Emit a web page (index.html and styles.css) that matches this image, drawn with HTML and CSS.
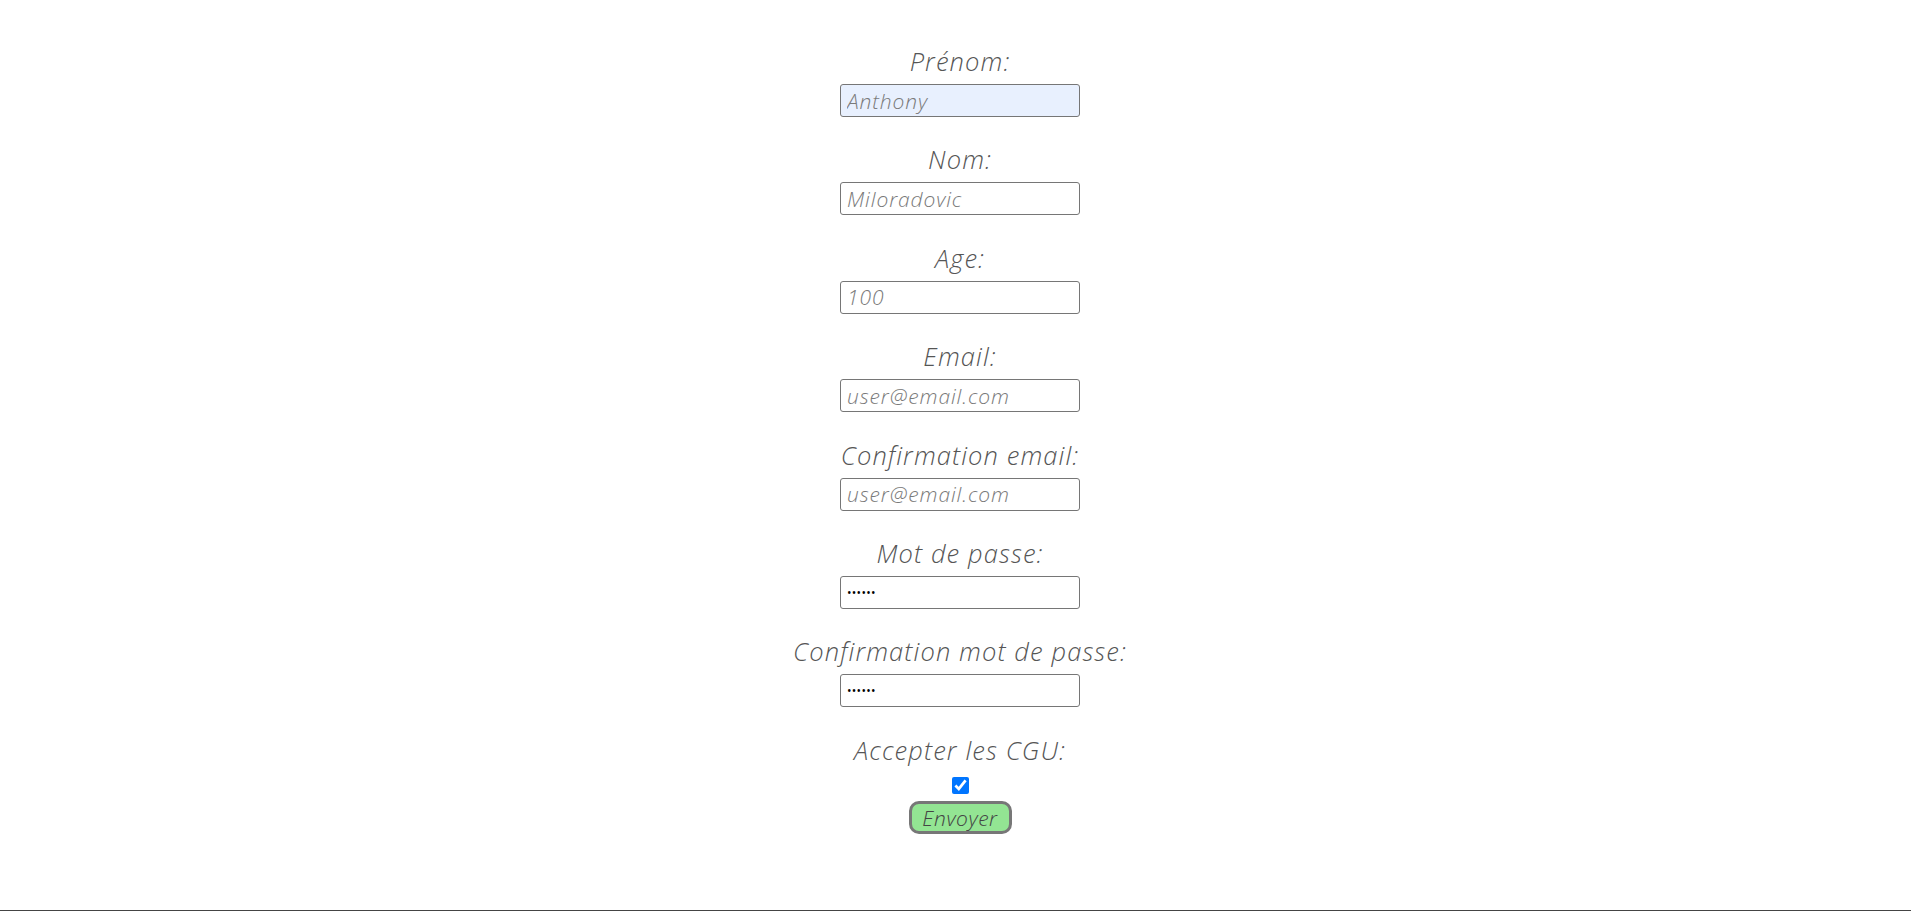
FILE: index.html
```html
<!DOCTYPE html>
<html lang="fr">
<head>
<meta charset="utf-8">
<title>Inscription</title>
<link rel="stylesheet" href="styles.css">
</head>
<body>
<form class="form">
  <div class="field">
    <label class="label" for="prenom">Prénom:</label>
    <input class="input autofill" id="prenom" type="text" placeholder="Anthony">
  </div>
  <div class="field">
    <label class="label" for="nom">Nom:</label>
    <input class="input" id="nom" type="text" placeholder="Miloradovic">
  </div>
  <div class="field">
    <label class="label" for="age">Age:</label>
    <input class="input" id="age" type="text" placeholder="100">
  </div>
  <div class="field">
    <label class="label" for="email">Email:</label>
    <input class="input" id="email" type="text" placeholder="user@email.com">
  </div>
  <div class="field">
    <label class="label" for="email2">Confirmation email:</label>
    <input class="input" id="email2" type="text" placeholder="user@email.com">
  </div>
  <div class="field">
    <label class="label" for="mdp">Mot de passe:</label>
    <input class="input password" id="mdp" type="password" value="aaaaaa">
  </div>
  <div class="field">
    <label class="label" for="mdp2">Confirmation mot de passe:</label>
    <input class="input password" id="mdp2" type="password" value="aaaaaa">
  </div>
  <div class="field last">
    <label class="label" for="cgu">Accepter les CGU:</label>
    <input class="check" id="cgu" type="checkbox" checked>
    <button class="submit" type="button">Envoyer</button>
  </div>
</form>
<div class="bottom-line"></div>
</body>
</html>
```
FILE: styles.css
```css
html, body {
  margin: 0;
  padding: 0;
  background: #ffffff;
}
body {
  height: 911px;
  display: flex;
  flex-direction: column;
  font-family: "Open Sans", "Lato", sans-serif;
  overflow: hidden;
}
.form {
  flex: 1;
  display: flex;
  flex-direction: column;
  align-items: center;
  padding-top: 46px;
  padding-left: 9px;
}
.field {
  display: flex;
  flex-direction: column;
  align-items: center;
  margin-bottom: 27.4px;
}
.label {
  font-style: italic;
  font-weight: 300;
  font-size: 25.5px;
  line-height: 30px;
  color: #555555;
  letter-spacing: 1.1px;
  margin-bottom: 8px;
}
.input {
  box-sizing: border-box;
  width: 240px;
  height: 33px;
  border: 1px solid #767676;
  border-radius: 3px;
  padding: 0 6px;
  font-family: "Open Sans", sans-serif;
  font-style: italic;
  font-weight: 300;
  font-size: 21px;
  color: #222;
  background: #fff;
  outline: none;
}
.input::placeholder {
  color: #7a7a7a;
  letter-spacing: 0.9px;
}
.input.autofill {
  background: #e8f0fe;
}
.input.password {
  font-style: normal;
  font-weight: 400;
  font-size: 12px;
  letter-spacing: 0.3px;
  color: #000;
}
.check {
  width: 17px;
  height: 17px;
  margin: 4px 0 7px;
  accent-color: #0075ff;
}
.submit {
  box-sizing: border-box;
  width: 103px;
  height: 33px;
  border: 3px solid #777777;
  border-radius: 10px;
  background: #93e593;
  font-family: "Open Sans", sans-serif;
  font-style: italic;
  font-weight: 300;
  font-size: 21px;
  letter-spacing: 0.6px;
  color: #444;
  padding: 0;
}
.bottom-line {
  height: 1px;
  background: #444444;
}
```
